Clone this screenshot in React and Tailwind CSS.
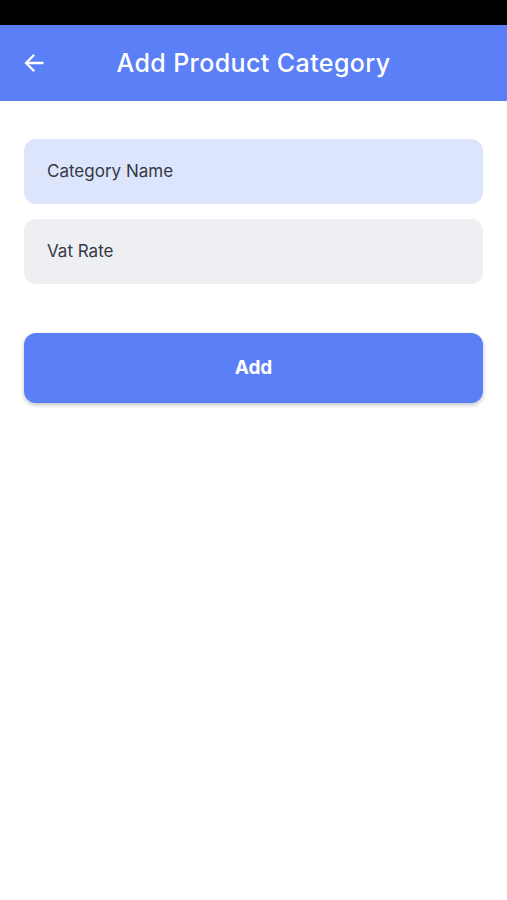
import React from 'react'

const App = () => {
  return (
    <div className="w-[507px] h-[900px] bg-white font-['Inter',sans-serif]">
      <div className="h-[25px] bg-black" />
      <div className="h-[76px] bg-[#5b7ff6] flex items-center px-6">
        <svg width="20" height="18" viewBox="0 0 20 18" fill="none" stroke="white" strokeWidth="2.4" strokeLinecap="round" strokeLinejoin="round">
          <path d="M18.5 9H2" />
          <path d="M9.5 1.5L2 9l7.5 7.5" />
        </svg>
        <h1 className="flex-1 text-center text-white text-[25px] font-medium tracking-[0.4px] pr-5 pt-[2px]">
          Add Product Category
        </h1>
      </div>
      <div className="px-6 pt-[38px] flex flex-col">
        <div className="h-[65px] rounded-xl bg-[#dde5fc] flex items-center px-[23px] text-[17px] text-[#343946]">
          Category Name
        </div>
        <div className="h-[65px] mt-[15px] rounded-xl bg-[#eeeff2] flex items-center px-[23px] text-[17px] text-[#343946]">
          Vat Rate
        </div>
        <button className="h-[70px] mt-[49px] rounded-xl bg-[#5b7ff6] text-white text-[19px] font-bold shadow-[0_2px_4px_rgba(0,0,0,0.25)]">
          Add
        </button>
      </div>
    </div>
  )
}

export default App
